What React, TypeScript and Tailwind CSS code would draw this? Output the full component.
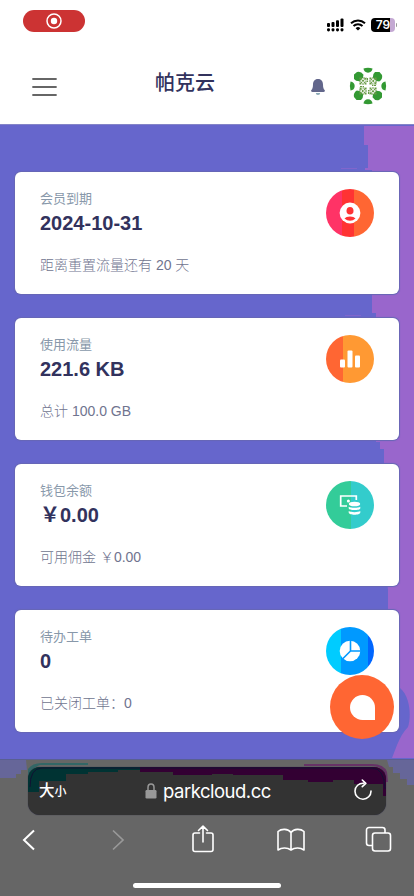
import React from "react";

function StatusBar() {
  return (
    <div className="flex h-12 items-start justify-between pl-[23px] pr-[17px] pt-[10px]">
      <div className="flex h-[22px] w-[62px] items-center justify-center rounded-full bg-[#cc3333]">
        <svg width="16" height="16" viewBox="0 0 16 16" fill="none">
          <circle cx="8" cy="8" r="7" stroke="white" strokeWidth="1.5" />
          <circle cx="8" cy="8" r="3.2" fill="white" />
        </svg>
      </div>
      <div className="flex items-center gap-[6px] pt-[8px]">
        <svg width="17" height="14" viewBox="0 0 17 14" fill="black">
          <rect x="0" y="5" width="3" height="4" rx="1" />
          <rect x="4.5" y="4" width="3" height="5" rx="1" />
          <rect x="9" y="2.3" width="3" height="6.7" rx="1" />
          <rect x="13.5" y="0.5" width="3" height="8.5" rx="1" />
          <rect x="0" y="10.2" width="3" height="3.3" rx="1.4" />
          <rect x="4.5" y="10.2" width="3" height="3.3" rx="1.4" />
          <rect x="9" y="10.2" width="3" height="3.3" rx="1.4" />
          <rect x="13.5" y="10.2" width="3" height="3.3" rx="1.4" />
        </svg>
        <svg width="16" height="12" viewBox="0 0 16 12" fill="none">
          <path d="M1 4.3a10.2 10.2 0 0 1 14 0M3.5 7a6.4 6.4 0 0 1 9 0" stroke="black" strokeWidth="2" />
          <path d="M8 11.5 5.6 9.2a3.4 3.4 0 0 1 4.8 0Z" fill="black" />
        </svg>
        <div className="-ml-[1px] flex items-center">
          <div className="flex h-[14px] w-[24px] items-center justify-center rounded-[4px] bg-[linear-gradient(90deg,#000_0_19px,#c4a9d3_19px)] font-['Inter',sans-serif] text-[12px] font-semibold leading-none text-white">79</div>
          <div className="ml-[1px] h-1 w-[1px] rounded-r bg-[#999999]" />
        </div>
      </div>
    </div>
  );
}

function Avatar() {
  return (
    <svg width="38" height="38" viewBox="0 0 38 38" className="block">
      <g fill="#339933">
        {[0, 90, 180, 270].map((r) => (
          <g key={r} transform={`rotate(${r} 19 19)`}>
            <path d="M14.500 1.500Q19 .2 23.500 1.500Q23 5.500 19 5.700Q15 5.500 14.500 1.500Z" />
            <path d="M5 9V7.500L8 5Q12 4 14.500 7.800L14 10.500 10.500 14.200Q6.500 14.200 5 12Z" />
          </g>
        ))}
      </g>
      <g fill="none" stroke="#669944" strokeWidth="1.100">
        {[0, 90, 180, 270].map((r) => (
          <g key={r} transform={`rotate(${r} 19 19)`}>
            <path d="M11 11h6v6h-6ZM17 11l-6 6M11 11l6 6M18.500 11v4" strokeDasharray="2.200 .6" />
          </g>
        ))}
      </g>
    </svg>
  );
}

function Header() {
  return (
    <header className="h-[124px] bg-white">
      <StatusBar />
      <div className="grid h-[76px] grid-cols-[155px_60px_1fr] items-center">
        <svg width="26" height="20" viewBox="0 0 26 20" className="ml-[32px] mt-[1px]" stroke="#666666" strokeWidth="1.8" strokeLinecap="round">
          <path d="M1 2h23M1 10h23M1 18h23" />
        </svg>
        <h1 className="-mt-[6px] whitespace-nowrap text-[20px] font-medium leading-7 text-[#32325d]">帕克云</h1>
        <div className="flex items-center justify-end gap-[24px] pr-[27px]">
          <svg width="14" height="16" viewBox="0 0 14 16" fill="#62668b" className="mt-[2px]">
            <path d="M7 0C10.500 0 12 2.500 12 5.500c0 3 .6 4.500 1.600 5.500.7.8.3 2-1 2H1.400c-1.300 0-1.700-1.200-1-2C1.400 10 2 8.500 2 5.500 2 2.500 3.500 0 7 0Z" />
            <path d="M4.800 14h4.400a2.200 2 0 0 1-4.400 0Z" fill="#8baab6" />
          </svg>
          <Avatar />
        </div>
      </div>
    </header>
  );
}

function BackdropBands() {
  return (
    <svg className="absolute inset-0" width="414" height="635" viewBox="0 0 414 635" aria-hidden="true">
      <path
        fill="#9966cc"
        d="M364 2V21H368V44H365V46H372V189H376V318H380V325H384V430L388 466V548H392V556H400V564C411 573 411 594 408 603C403 608 400 614 397 621L392 634H414V2Z"
      />
      <path fill="#9966cc" d="M341 44h16v1h-16zM345 191h16v1h-16z" opacity=".5" />
    </svg>
  );
}

function UserIcon() {
  return (
    <svg width="22" height="22" viewBox="0 0 22 22">
      <circle cx="11" cy="11" r="10.400" fill="white" />
      <ellipse cx="11" cy="8.800" rx="3.500" ry="3.800" fill="#ff3333" />
      <path d="M5.500 16.500Q7 14.600 11 14.600T16.500 16.500Q14 18.800 11 18.800T5.500 16.500Z" fill="#ff3333" />
    </svg>
  );
}

function BarsIcon() {
  return (
    <svg width="22" height="18" viewBox="0 0 22 18" fill="white">
      <rect x="1" y="9.500" width="5" height="8" rx="1" />
      <rect x="8.500" y="0.500" width="5" height="17" rx="1" />
      <rect x="16" y="5.500" width="5" height="12" rx="1" />
    </svg>
  );
}

function MoneyIcon() {
  return (
    <svg width="22" height="22" viewBox="0 0 22 22">
      <path d="M8 12H1.700V2H17.300V6" fill="none" stroke="white" strokeWidth="1.700" />
      <circle cx="9.400" cy="7" r="1.500" fill="white" />
      <g fill="white">
        <ellipse cx="15.500" cy="10" rx="5.700" ry="2.300" />
        <path d="M9.700 12.700c2 1.500 9.600 1.500 11.600 0v1.500c0 2.500-11.600 2.500-11.600 0ZM9.700 17c2 1.500 9.600 1.500 11.600 0v1.400c0 3-11.600 3-11.600 0Z" />
      </g>
    </svg>
  );
}

function PieIcon() {
  return (
    <svg width="22" height="22" viewBox="0 0 22 22">
      <circle cx="11" cy="11" r="10.300" fill="white" />
      <path d="M11.500 0V11H22M11.500 11 3.500 19" fill="none" stroke="#0099ff" strokeWidth="1.600" />
    </svg>
  );
}

const cards = [
  {
    label: "会员到期",
    value: "2024-10-31",
    note: "距离重置流量还有 20 天",
    disc: "bg-[linear-gradient(90deg,#ff3366_0_16px,#ff3333_16px_28px,#ff6633_28px)]",
    icon: <UserIcon />,
  },
  {
    label: "使用流量",
    value: "221.6 KB",
    note: "总计 100.0 GB",
    disc: "bg-[linear-gradient(90deg,#ff6633_0_17px,#ff9933_17px)]",
    icon: <BarsIcon />,
  },
  {
    label: "钱包余额",
    value: "￥0.00",
    note: "可用佣金 ￥0.00",
    disc: "bg-[linear-gradient(90deg,#33cc99_0_25px,#33cccc_25px)]",
    icon: <MoneyIcon />,
  },
  {
    label: "待办工单",
    value: "0",
    note: "已关闭工单：0",
    disc: "bg-[linear-gradient(90deg,#00ccff_0_15px,#0099ff_15px_42px,#0066ff_42px)]",
    icon: <PieIcon />,
  },
];

function StatCard({ label, value, note, disc, icon }: (typeof cards)[number]) {
  return (
    <section className="flex h-[122px] justify-between rounded-[6px] bg-white pl-[25px] pr-[25px] pt-[17px] shadow-[0_0_1px_1px_#6666b5]">
      <div className="whitespace-nowrap">
        <div className="text-[13px] leading-5 text-[#8898aa]">{label}</div>
        <div className="h-7 text-[20px] font-bold leading-7 text-[#32325d]">{value}</div>
        <div className="mt-[18px] h-5 text-[14px] font-light leading-5 text-[#70748f]">{note}</div>
      </div>
      <div className={`flex h-12 w-12 items-center justify-center rounded-full ${disc}`}>{icon}</div>
    </section>
  );
}

function BrowserBar() {
  return (
    <footer className="relative h-[137px] bg-[#666666] pt-[8px] shadow-[inset_0_1px_0_#595f91]">
      <svg className="absolute inset-x-0 top-px" width="414" height="26" viewBox="0 0 414 26" aria-hidden="true">
        <path d="M0 0H26L27 10H21V14H16V18H0ZM414 0H387L389 7H393V13H400V19H407V25H414Z" fill="#666699" />
        <path d="M28 22V9Q32 3 42 3H88V5H40Q30 8 30 22Z" fill="#336666" />
        <path d="M304 4H372Q384 4 387 12L388 22H385Q386 6 372 6H304Z" fill="#663366" />
      </svg>
      <div className="relative mx-auto flex h-[48px] w-[358px] items-center overflow-hidden rounded-[12px] bg-[#333333] px-[11px] text-white shadow-[0_0_1px_#222244]">
        <svg className="absolute inset-0" width="358" height="48" viewBox="0 0 358 48" aria-hidden="true">
          <path d="M0 0H112V3H90V5H60V7H38V14H11V25H0Z" fill="#003333" />
          <path d="M112 0H358V29H355V17H326V13H305V15H280V13H255V8H205V7H184V8H145V5H112Z" fill="#330033" />
          <path d="M2 20Q2 1 14 1H344Q356 1 357 22" fill="none" stroke="#111133" strokeWidth="1" />
        </svg>
        <div className="relative flex w-[106px] items-baseline leading-none"><span className="text-[15.500px] font-medium">大</span><span className="text-[12px] font-medium">小</span></div>
        <div className="relative flex items-center">
          <svg width="12" height="16" viewBox="0 0 12 16" className="mr-[6px]">
            <rect x=".5" y="7" width="11" height="8.500" rx="1.200" fill="#999999" />
            <path d="M3 7.500V4.500a3 3.400 0 0 1 6 0v3" fill="none" stroke="#999999" strokeWidth="1.500" />
          </svg>
          <span className="font-['Inter',sans-serif] text-[18.500px] leading-6 tracking-[-0.5px]">parkcloud.cc</span>
        </div>
        <svg className="relative ml-auto mr-[2px] -mt-[3px]" width="20" height="22" viewBox="0 0 20 22" fill="none" stroke="white" strokeWidth="1.600" strokeLinecap="round" strokeLinejoin="round">
          <path d="M10.500 4.200A8 8 0 1 0 18 12M9.300 1l3.500 3.400L9.300 7.700" />
        </svg>
      </div>
      <nav className="mt-[1px] flex h-[48px] items-center justify-between pl-[22px] pr-[22px]">
        <svg width="14" height="22" viewBox="0 0 14 22" fill="none" stroke="white" strokeWidth="2"><path d="M12 1.500 2 11l10 9.500" /></svg>
        <svg className="ml-[15px]" width="14" height="22" viewBox="0 0 14 22" fill="none" stroke="#999999" strokeWidth="1.700"><path d="m2 1.500 10 9.500L2 20.500" /></svg>
        <svg className="ml-[5px] -mt-[2px]" width="24" height="28" viewBox="0 0 24 28" fill="none" stroke="white" strokeWidth="1.600" strokeLinecap="round" strokeLinejoin="round">
          <path d="M8.500 8H4a2 2 0 0 0-2 2v14.500a2 2 0 0 0 2 2h16a2 2 0 0 0 2-2V10a2 2 0 0 0-2-2h-4.500M12 17V1.500M7.500 5.500 12 1.200l4.500 4.300" />
        </svg>
        <svg className="ml-[2px]" width="28" height="24" viewBox="0 0 28 24" fill="none" stroke="white" strokeWidth="1.600" strokeLinejoin="round">
          <path d="M14 4.500C11 .5 4.500.5 1 3.500V22c4-3 9.500-2.500 13 0 3.500-2.500 9-3 13 0V3.500C23.500.5 17 .5 14 4.500ZM14 4.500V22" />
        </svg>
        <svg className="-mt-[2px]" width="27" height="27" viewBox="0 0 27 27" fill="none" stroke="white" strokeWidth="1.600">
          <path d="M7.500 19.500H4a2.500 2.500 0 0 1-2.500-2.500V4A2.500 2.500 0 0 1 4 1.500h13.500A2.500 2.500 0 0 1 20 4v3" />
          <rect x="7.500" y="7" width="18" height="18" rx="2.500" />
        </svg>
      </nav>
      <div className="mx-auto mt-[19px] h-[5px] w-[148px] rounded-full bg-white" />
    </footer>
  );
}

export default function App() {
  return (
    <div className="flex h-[896px] w-[414px] flex-col overflow-hidden font-['Liberation_Sans','Noto_Sans_CJK_SC',sans-serif]">
      <Header />
      <main className="relative h-[635px] bg-[#6666cc] px-[15px] pt-[48px] shadow-[inset_0_1px_0_#8484c8]">
        <BackdropBands />
        <div className="relative flex flex-col gap-6">
          {cards.map((card) => (
            <StatCard key={card.label} {...card} />
          ))}
        </div>
        <button aria-label="chat" className="absolute bottom-[20px] right-[20px] flex h-16 w-16 items-center justify-center rounded-full bg-[#ff6633]">
          <span className="h-[25px] w-[25px] rounded-full rounded-br-[1px] bg-white" />
        </button>
      </main>
      <BrowserBar />
    </div>
  );
}
